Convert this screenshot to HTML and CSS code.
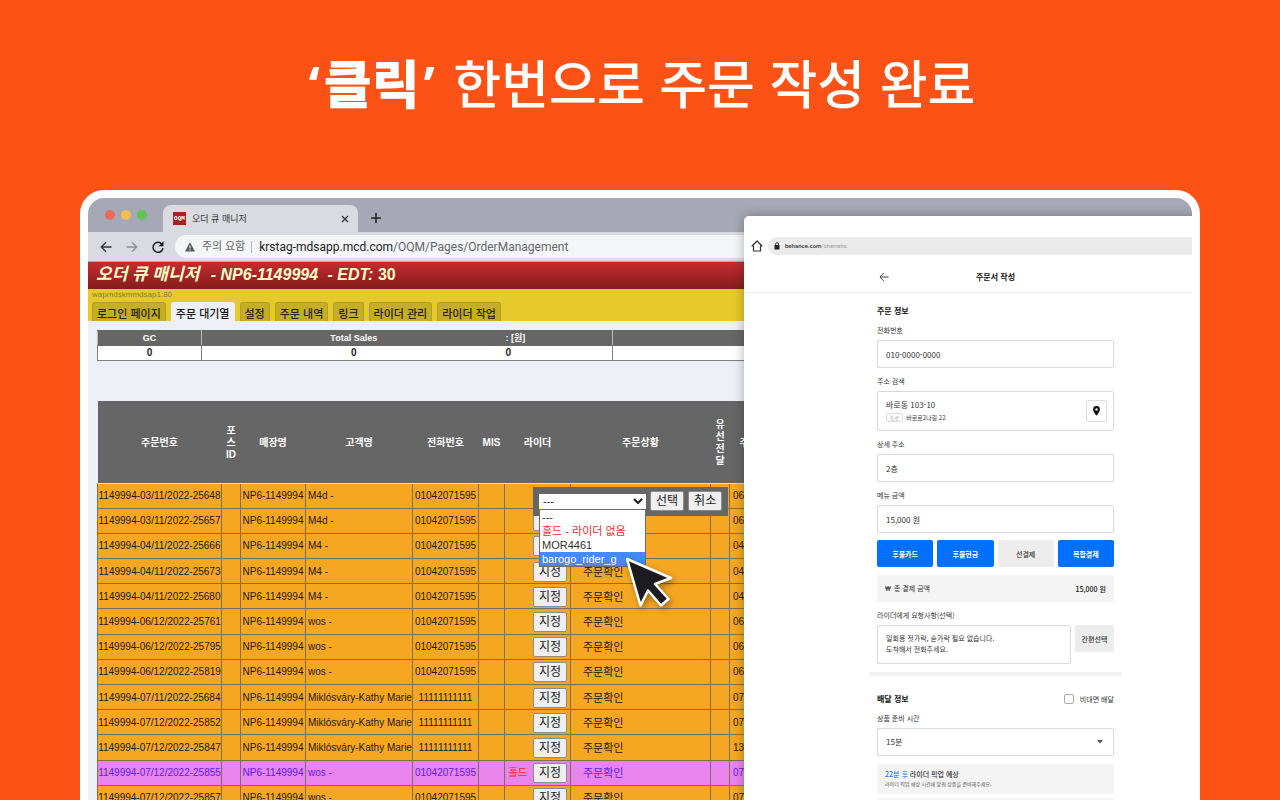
FILE: index.html
```html
<!DOCTYPE html>
<html lang="ko">
<head>
<meta charset="utf-8">
<title>주문 작성</title>
<link rel="stylesheet" href="styles.css">
</head>
<body>
<h1 class="headline"><b><i>‘</i>클릭<i>’</i></b> 한번으로 주문 작성 완료</h1>
<main class="window">
  <div class="tabstrip">
    <span class="dot red"></span><span class="dot amber"></span><span class="dot green"></span>
    <div class="tab">
      <span class="favicon">OQM</span><span class="tab-title">오더 큐 매니저</span>
      <button class="icon-btn" aria-label="탭 닫기"><svg width="8" height="8" viewBox="0 0 8 8"><path d="M1 1l6 6M7 1l-6 6" stroke="#333" stroke-width="1.3"/></svg></button>
    </div>
    <button class="icon-btn add" aria-label="새 탭"><svg width="10" height="10" viewBox="0 0 10 10"><path d="M5 0v10M0 5h10" stroke="#222" stroke-width="1.6"/></svg></button>
  </div>
  <div class="toolbar">
    <button class="icon-btn" aria-label="뒤로"><svg width="12" height="12" viewBox="0 0 12 12" fill="none" stroke="#333" stroke-width="1.4"><path d="M11.500 6H1.500M6 1.300L1.300 6 6 10.700"/></svg></button>
    <button class="icon-btn" aria-label="앞으로"><svg width="12" height="12" viewBox="0 0 12 12" fill="none" stroke="#8d8f96" stroke-width="1.4"><path d="M.5 6h10M6 1.300L10.700 6 6 10.700"/></svg></button>
    <button class="icon-btn" aria-label="새로고침"><svg width="12" height="12" viewBox="0 0 12 12"><path d="M10 3.200A5 5 0 1 0 11 7.200" fill="none" stroke="#222" stroke-width="1.500"/><path d="M11.500 .3v5h-5z" fill="#222"/></svg></button>
    <div class="url">
      <svg width="10" height="10" viewBox="0 0 10 10"><path d="M5 .3L10 9.500H0z" fill="#55585d"/><path d="M5 3.500v3M5 7.300v1.200" stroke="#f5f6f8" stroke-width="1.100"/></svg>
      <span class="warn">주의 요함</span>
      <span class="addr"><b>krstag-mdsapp.mcd.com</b>/OQM/Pages/OrderManagement</span>
    </div>
  </div>
  <header class="app-title"><span class="ko">오더 큐 매니저</span> <span class="store">- NP6-1149994</span> <span class="edt">- EDT: <b>30</b></span></header>
  <div class="nav">
    <div class="host">wapmdskmmdsap1:80</div>
    <nav>
      <a href="#">로그인 페이지</a><a href="#" class="active">주문 대기열</a><a href="#">설정</a><a href="#">주문 내역</a><a href="#">링크</a><a href="#">라이더 관리</a><a href="#">라이더 작업</a>
    </nav>
  </div>
  <section class="content">
    <table class="summary">
      <colgroup><col class="s-gc"><col class="s-sales"><col class="s-won"><col></colgroup>
      <tr><th>GC</th><th>Total Sales</th><th class="open">: [원]</th><th class="rule"></th></tr>
      <tr><td>0</td><td>0</td><td class="open">0</td><td class="rule"></td></tr>
    </table>
    <table class="orders">
      <colgroup><col class="c-no"><col class="c-slim"><col class="c-store"><col class="c-name"><col class="c-phone"><col class="c-mis"><col class="c-rider"><col class="c-state"><col class="c-slim"><col></colgroup>
      <thead><tr><th>주문번호</th><th>포<br>스<br>ID</th><th>매장명</th><th>고객명</th><th>전화번호</th><th>MIS</th><th>라이더</th><th>주문상황</th><th>유<br>선<br>전<br>달</th><th class="date">주</th></tr></thead>
      <tbody>
      <tr><td>1149994-03/11/2022-25648</td><td></td><td>NP6-1149994</td><td class="name">M4d -</td><td>01042071595</td><td></td><td class="rider">
        <div class="picker">
          <div class="combo">
            <select aria-label="라이더"><option>---</option></select>
            <ul class="options"><li>---</li><li class="hold">홀드 - 라이더 없음</li><li>MOR4461</li><li class="picked">barogo_rider_g</li></ul>
          </div>
          <button class="btn">선택</button><button class="btn">취소</button>
          <svg class="cursor" width="60" height="64" viewBox="0 0 60 64"><path d="M5 5L49 24 33 30 46.500 45 39 51.500 26 36.500 18.500 51.500Z" fill="#1d1b20" stroke="#fff" stroke-width="2.500" stroke-linejoin="round"/></svg>
        </div>
      </td><td class="state"></td><td></td><td class="date">06-</td></tr>
      <tr><td>1149994-03/11/2022-25657</td><td></td><td>NP6-1149994</td><td class="name">M4d -</td><td>01042071595</td><td></td><td class="rider"><button class="btn" aria-label="지정"></button></td><td class="state"></td><td></td><td class="date">06-</td></tr>
      <tr><td>1149994-04/11/2022-25666</td><td></td><td>NP6-1149994</td><td class="name">M4 -</td><td>01042071595</td><td></td><td class="rider"><button class="btn" aria-label="지정"></button></td><td class="state"></td><td></td><td class="date">04-</td></tr>
      <tr><td>1149994-04/11/2022-25673</td><td></td><td>NP6-1149994</td><td class="name">M4 -</td><td>01042071595</td><td></td><td class="rider"><button class="btn">지정</button></td><td class="state">주문확인</td><td></td><td class="date">04-</td></tr>
      <tr><td>1149994-04/11/2022-25680</td><td></td><td>NP6-1149994</td><td class="name">M4 -</td><td>01042071595</td><td></td><td class="rider"><button class="btn">지정</button></td><td class="state">주문확인</td><td></td><td class="date">04-</td></tr>
      <tr><td>1149994-06/12/2022-25761</td><td></td><td>NP6-1149994</td><td class="name">wos -</td><td>01042071595</td><td></td><td class="rider"><button class="btn">지정</button></td><td class="state">주문확인</td><td></td><td class="date">06-</td></tr>
      <tr><td>1149994-06/12/2022-25795</td><td></td><td>NP6-1149994</td><td class="name">wos -</td><td>01042071595</td><td></td><td class="rider"><button class="btn">지정</button></td><td class="state">주문확인</td><td></td><td class="date">06-</td></tr>
      <tr><td>1149994-06/12/2022-25819</td><td></td><td>NP6-1149994</td><td class="name">wos -</td><td>01042071595</td><td></td><td class="rider"><button class="btn">지정</button></td><td class="state">주문확인</td><td></td><td class="date">06-</td></tr>
      <tr><td>1149994-07/11/2022-25684</td><td></td><td>NP6-1149994</td><td class="name">Miklósváry-Kathy Marie</td><td>11111111111</td><td></td><td class="rider"><button class="btn">지정</button></td><td class="state">주문확인</td><td></td><td class="date">07-</td></tr>
      <tr><td>1149994-07/12/2022-25852</td><td></td><td>NP6-1149994</td><td class="name">Miklósváry-Kathy Marie</td><td>11111111111</td><td></td><td class="rider"><button class="btn">지정</button></td><td class="state">주문확인</td><td></td><td class="date">07-</td></tr>
      <tr><td>1149994-07/12/2022-25847</td><td></td><td>NP6-1149994</td><td class="name">Miklósváry-Kathy Marie</td><td>11111111111</td><td></td><td class="rider"><button class="btn">지정</button></td><td class="state">주문확인</td><td></td><td class="date">13-</td></tr>
      <tr class="held"><td>1149994-07/12/2022-25855</td><td></td><td>NP6-1149994</td><td class="name">wos -</td><td>01042071595</td><td></td><td class="rider"><span class="hold">홀드</span><button class="btn">지정</button></td><td class="state">주문확인</td><td></td><td class="date">07-</td></tr>
      <tr><td>1149994-07/12/2022-25857</td><td></td><td>NP6-1149994</td><td class="name">wos -</td><td>01042071595</td><td></td><td class="rider"><button class="btn">지정</button></td><td class="state">주문확인</td><td></td><td class="date">07-</td></tr>
      </tbody>
    </table>
  </section>

  <aside class="sheet">
    <div class="sheet-bar">
      <svg width="12" height="12" viewBox="0 0 12 12" fill="none" stroke="#333" stroke-width="1.200" stroke-linejoin="round"><path d="M6 1L1 6h1.500v5h7V6H11z"/></svg>
      <div class="sheet-url"><svg width="6" height="8" viewBox="0 0 6 8"><rect x=".5" y="3" width="5" height="4.500" rx=".6" fill="#222"/><path d="M1.600 3V2a1.400 1.400 0 0 1 2.800 0v1" fill="none" stroke="#222" stroke-width=".8"/></svg><span><b>behance.com</b>/sherrehs</span></div>
    </div>
    <div class="sheet-head">
      <div class="sheet-head-in">
        <button class="icon-btn" aria-label="뒤로"><svg width="10" height="10" viewBox="0 0 10 10" fill="none" stroke="#444" stroke-width="1"><path d="M9.500 5H1M4.800 1L.9 5l3.900 4"/></svg></button>
        <h2>주문서 작성</h2>
      </div>
    </div>
    <form class="form">
      <h3>주문 정보</h3>
      <label for="phone">전화번호</label>
      <input id="phone" class="field" type="text" value="010-0000-0000">
      <label for="pin">주소 검색</label>
      <div class="address">
        <div><p>바로동 103-10</p><p class="road"><span class="badge">도로</span>바로로2나길 22</p></div>
        <button id="pin" type="button" class="pin" aria-label="지도"><svg width="7" height="10" viewBox="0 0 7 10"><path d="M3.500 0A3.400 3.400 0 0 0 .1 3.400C.1 5.900 3.500 9.600 3.500 9.600S6.900 5.900 6.900 3.400A3.400 3.400 0 0 0 3.500 0z" fill="#111"/><circle cx="3.500" cy="3.400" r="1.200" fill="#fff"/></svg></button>
      </div>
      <label for="detail">상세 주소</label>
      <input id="detail" class="field" type="text" value="2층">
      <label for="price">메뉴 금액</label>
      <input id="price" class="field" type="text" value="15,000 원">
      <div class="pay"><button type="button">후불카드</button><button type="button">후불현금</button><button type="button" class="off">선결제</button><button type="button">복합결제</button></div>
      <div class="total"><span><span class="won">₩</span>총 결제 금액</span><b>15,000 원</b></div>
      <label for="memo">라이더에게 요청사항(선택)</label>
      <div class="memo"><textarea id="memo">일회용 젓가락, 숟가락 필요 없습니다.
도착해서 전화주세요.</textarea><button type="button">간편선택</button></div>
      <hr>
      <div class="delivery"><h3>배달 정보</h3><label class="check"><input type="checkbox">비대면 배달</label></div>
      <label for="ready">상품 준비 시간</label>
      <div class="ready"><select id="ready" class="field"><option>15분</option></select><svg width="6" height="4" viewBox="0 0 6 4"><path d="M0 0h6L3 3.500z" fill="#555"/></svg></div>
      <div class="notice"><p><em>22분 후</em> 라이더 픽업 예상</p><p class="small">라이더 픽업 예상 시간에 맞춰 상품을 준비해주세요.</p></div>
      <div class="notice"></div>
    </form>
  </aside>
</main>
</body>
</html>
```
FILE: styles.css
```css
* { box-sizing: border-box; }
body {
  margin: 0;
  height: 100vh;
  overflow: hidden;
  display: flex;
  flex-direction: column;
  background: #fc5216;
  font-family: "Liberation Sans", "Noto Sans CJK KR", sans-serif;
}
button, input, select, textarea { font: inherit; color: inherit; margin: 0; }
p, h2, h3, ul { margin: 0; padding: 0; }
svg { display: block; flex: none; }

.headline {
  margin: 0;
  height: 190px;
  padding-top: 46px;
  flex: none;
  text-align: center;
  color: #fff;
  font: 500 52px/72px "Noto Sans CJK KR", sans-serif;
}
.headline b { font-weight: 900; }
.headline i { margin: 0 4px; font: bold 52px/52px "Open Sans", sans-serif; }

.window {
  position: relative;
  flex: 1;
  min-height: 0;
  margin: 0 80px;
  border: 8px solid #fff;
  border-bottom: 0;
  border-radius: 24px 24px 0 0;
  overflow: hidden;
  background: #edf1f7;
}
.icon-btn { display: flex; padding: 0; border: 0; background: none; }

.tabstrip {
  display: flex;
  align-items: center;
  gap: 6px;
  height: 34px;
  padding-left: 17px;
  background: #a6a9b5;
}
.dot { width: 10px; height: 10px; border-radius: 50%; }
.red { background: #ec6a5e; }
.amber { background: #f4bf4f; }
.green { background: #61c554; }
.tab {
  align-self: flex-end;
  display: flex;
  align-items: center;
  width: 195px;
  height: 27px;
  margin-left: 10px;
  padding: 0 9px 0 10px;
  border-radius: 8px 8px 0 0;
  background: #dadbe0;
}
.favicon {
  width: 13px;
  background: #a32422;
  color: #fff;
  font: bold 6px/13px "Liberation Mono", monospace;
  text-align: center;
}
.tab-title { flex: 1; margin-left: 6px; font: 9px/14px "Noto Sans CJK KR", sans-serif; color: #333; }
.add { margin: 6px 0 0 7px; }

.toolbar {
  display: flex;
  align-items: center;
  gap: 14px;
  height: 30px;
  padding-left: 12px;
  background: #dadbe0;
  border-bottom: 1px solid #a4abb4;
}
.url {
  flex: 1;
  display: flex;
  align-items: center;
  height: 23px;
  margin-left: -3px;
  padding-left: 10px;
  border-radius: 12px 0 0 12px;
  background: #f5f6f8;
  color: #64676c;
  font: 12px/16px Roboto, "Noto Sans CJK KR", sans-serif;
}
.warn { margin: 0 7px; padding-right: 6px; border-right: 1px solid #b5b7bb; font-size: 11px; line-height: 12px; }
.addr b { color: #222; font-weight: 400; }

.app-title {
  height: 27px;
  padding-left: 8px;
  background: linear-gradient(#c62c2f, #841c1c);
  color: #ffc;
  font: italic bold 16px/26px "Liberation Sans", "Noto Sans CJK KR", sans-serif;
  white-space: nowrap;
}
.app-title .ko { margin-right: 7px; font-size: 17px; }
.app-title .store { margin-right: 5px; }
.app-title b { font-style: normal; }

.nav { display: flex; flex-direction: column; justify-content: space-between; height: 32px; padding-left: 4px; background: #e6c92c; }
.host { font-size: 8px; line-height: 12px; color: #8a7c3a; }
nav { display: flex; gap: 5px; }
nav a {
  height: 19px;
  padding: 0 4px;
  border: 1px solid #b59f22;
  border-bottom: 0;
  border-radius: 3px 3px 0 0;
  background: #c6ad26;
  color: #241f06;
  font: 500 11px/20px "Noto Sans CJK KR", sans-serif;
  text-decoration: none;
  white-space: nowrap;
}
nav a.active { background: #edf1f7; border-color: #edf1f7; color: #111; }

.content { padding: 9px 0 0 9px; }
table { width: 100%; table-layout: fixed; border-collapse: collapse; }
.summary { font: bold 10px/14px "Liberation Sans", "Noto Sans CJK KR", sans-serif; }
.summary th, .summary td { height: 15px; padding: 0; border: 1px solid #808080; text-align: center; }
.summary th { background: #666; color: #fff; border-color: #666 #bbb; font-size: 9px; }
.summary td { background: #fff; color: #222; }
.summary .open { border-left: 0; text-align: left; }
.summary tr > :nth-child(2) { border-right: 0; }
.s-gc { width: 104px; }
.s-sales { width: 304px; }
.s-won { width: 107px; }

.orders { height: 410px; margin-top: 40px; font-size: 10px; line-height: 12px; color: #1f1704; }
.orders th { height: 82px; padding: 2px 0 0; background: #666; color: #fff; border-bottom: 1px solid #ddd; }
.orders td { height: 25px; padding: 1px 0 0; border: 1px solid #806f56; background: #f6a722; text-align: center; white-space: nowrap; }
.orders td.name { text-align: left; padding-left: 2px; }
.orders td.state { text-align: left; padding-left: 12px; font-size: 11px; }
.orders .date { text-align: left; padding-left: 3px; }
.orders th.date { padding-left: 10px; }
.orders .held td { background: #e884ec; color: #5a1df2; }
.orders td.rider { position: relative; text-align: right; padding-right: 3px; }
.rider .hold { margin-right: 6px; }
.orders .hold, .orders .held .hold { color: #f22b2b; }
.c-no { width: 124px; }
.c-slim { width: 19px; }
.c-store { width: 65px; }
.c-name { width: 107px; }
.c-phone { width: 66px; }
.c-mis { width: 26px; }
.c-rider { width: 66px; }
.c-state { width: 140px; }
.btn {
  min-width: 34px;
  height: 20px;
  padding: 0 5px;
  border: 1px solid #8c8c8c;
  border-radius: 2px;
  background: #efefef;
  color: #222;
  font-size: 12px;
  line-height: 16px;
  vertical-align: middle;
}
.picker {
  position: absolute;
  z-index: 1;
  left: 28px;
  top: 3px;
  display: flex;
  align-items: center;
  gap: 4px;
  width: 195px;
  height: 29px;
  padding-left: 6px;
  background: #666;
}
.combo { position: relative; width: 107px; }
.combo select { display: block; width: 100%; height: 15px; padding: 0; border: 0; background: #fff; color: #222; font-size: 11px; }
.options {
  position: absolute;
  top: 15px;
  left: 0;
  width: 100%;
  border: 1px solid #6a6a6a;
  background: #fff;
  color: #333;
  list-style: none;
  text-align: left;
  font-size: 11px;
  line-height: 14px;
}
.options li { padding-left: 2px; height: 14px; }
.options .hold { margin: 0; }
.options .picked { background: #438bf7; color: #fff; }
.cursor { position: absolute; left: 89px; top: 67px; filter: drop-shadow(2px 3px 3px rgba(0, 0, 0, .35)); }

.sheet {
  position: absolute;
  z-index: 2;
  left: 656px;
  top: 18px;
  bottom: 0;
  width: 503px;
  overflow: hidden;
  border-radius: 5px 0 0 0;
  background: #fff;
  box-shadow: 0 0 12px rgba(0, 0, 0, .3);
  color: #333;
  font: 7px/10px "Noto Sans CJK KR", sans-serif;
}
.sheet-bar { display: flex; align-items: center; gap: 5px; height: 46px; padding: 13px 0 0 7px; }
.sheet-url { flex: 1; display: flex; align-items: center; gap: 5px; height: 18px; padding-left: 6px; border-radius: 9px 0 0 9px; background: #ebebeb; color: #999; font: 6px/8px Roboto, sans-serif; }
.sheet-url b { color: #333; font-weight: 500; }
.sheet-head { height: 31px; border-bottom: 1px solid #eee; }
.sheet-head-in { display: flex; align-items: center; width: 237px; height: 30px; margin: 0 auto; padding-left: 2px; }
.sheet h2 { flex: 1; padding-right: 12px; text-align: center; font-size: 8px; color: #111; }
.form { width: 237px; margin: 0 auto; padding-top: 12px; }
.form h3 { font-size: 8px; line-height: 12px; color: #111; }
.form label { display: block; margin-top: 8px; }
.field { display: block; width: 100%; height: 28px; margin-top: 5px; padding: 0 8px; border: 1px solid #d9d9d9; border-radius: 2px; background: #fff; font-size: 8px; }
.address { display: flex; align-items: center; justify-content: space-between; height: 40px; margin-top: 5px; padding: 0 6px 0 8px; border: 1px solid #d9d9d9; border-radius: 2px; font-size: 8px; line-height: 13px; }
.road { font-size: 6px; }
.badge { display: inline-block; margin-right: 3px; padding: 0 3px; border: 1px solid #ddd; border-radius: 2px; color: #888; font-size: 5px; line-height: 7px; }
.pin { display: flex; align-items: center; justify-content: center; width: 21px; height: 22px; padding: 0; border: 1px solid #ddd; border-radius: 2px; background: #fff; }
.pay { display: grid; grid-template-columns: repeat(4, 1fr); gap: 4px; margin-top: 7px; }
.pay button, .memo button { height: 27px; padding: 0; border: 0; border-radius: 2px; background: #0070ff; color: #fff; font-weight: 700; }
.pay .off, .memo button { background: #ededed; color: #333; font-weight: 500; }
.total { display: flex; align-items: center; justify-content: space-between; height: 27px; margin-top: 8px; padding: 0 8px; background: #f4f4f4; border-radius: 2px; }
.total b { color: #111; font-weight: 500; }
.won { margin-right: 3px; font: 8px/10px Roboto, sans-serif; }
.memo { display: flex; gap: 4px; margin-top: 5px; }
.memo textarea { display: block; width: 194px; height: 39px; padding: 7px 8px; border: 1px solid #d9d9d9; border-radius: 2px; resize: none; overflow: hidden; line-height: 11px; }
.memo button { flex: 1; }
.form hr { height: 4px; margin: 8px -8px 0; border: 0; background: #f3f3f3; }
.delivery { display: flex; align-items: center; justify-content: space-between; margin-top: 17px; }
.form .check { display: flex; align-items: center; gap: 6px; margin: 0; }
.check input { appearance: none; width: 10px; height: 10px; border: 1px solid #aaa; border-radius: 2px; background: #fff; }
.ready { display: grid; align-items: center; }
.ready > * { grid-area: 1 / 1; }
.ready select { appearance: none; }
.ready svg { justify-self: end; margin: 5px 11px 0 0; }
.notice { min-height: 29px; margin-top: 8px; padding: 5px 8px; border-radius: 2px; background: #f4f4f4; font-weight: 500; }
.notice + .notice { margin-top: 4px; }
.notice em { color: #1a7cf5; font-style: normal; }
.notice .small { font-weight: 400; font-size: 5px; color: #555; }
```
